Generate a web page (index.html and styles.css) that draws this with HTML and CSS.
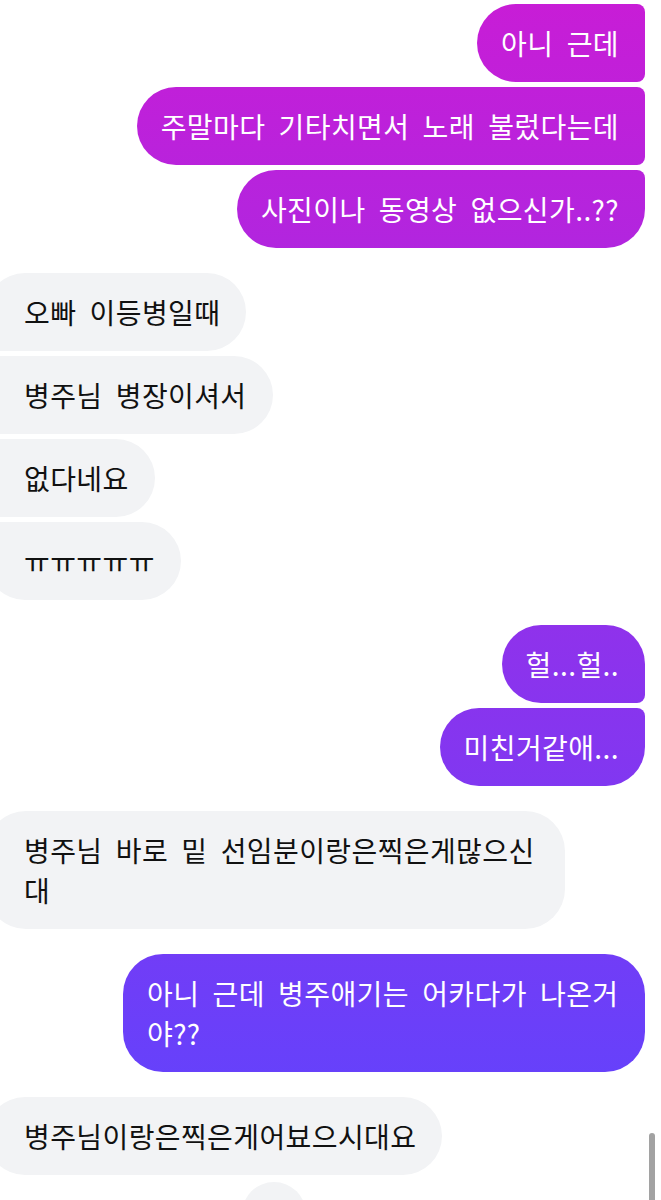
FILE: index.html
```html
<!DOCTYPE html>
<html lang="ko">
<head>
  <meta charset="UTF-8">
  <meta name="viewport" content="width=device-width, initial-scale=1">
  <title>Direct</title>
  <link rel="stylesheet" href="styles.css">
</head>
<body>
  <div class="chat">
    <div class="group out">
      <div class="msg">아니 근데</div>
      <div class="msg">주말마다 기타치면서 노래 불렀다는데</div>
      <div class="msg last">사진이나 동영상 없으신가..??</div>
    </div>

    <div class="group in">
      <div class="msg first">오빠 이등병일때</div>
      <div class="msg">병주님 병장이셔서</div>
      <div class="msg">없다네요</div>
      <div class="msg last">ㅠㅠㅠㅠㅠ</div>
    </div>

    <div class="group out">
      <div class="msg first">헐...헐..</div>
      <div class="msg last">미친거같애...</div>
    </div>

    <div class="group in">
      <div class="msg single wide">병주님 바로 밑 선임분이랑은찍은게많으신대</div>
    </div>

    <div class="group out">
      <div class="msg single wide">아니 근데 병주애기는 어카다가 나온거야??</div>
    </div>

    <div class="group in">
      <div class="msg single">병주님이랑은찍은게어뵤으시대요</div>
      <div class="typing"></div>
    </div>
  </div>

  <div class="scrollbar"></div>
</body>
</html>
```

FILE: styles.css
```css
* {
  margin: 0;
  padding: 0;
  box-sizing: border-box;
}

body {
  background: #fff;
  font-family: "Noto Sans CJK KR", "Noto Sans", sans-serif;
  width: 661px;
  height: 1200px;
  overflow: hidden;
  position: relative;
}

.chat {
  display: flex;
  flex-direction: column;
  gap: 25px;
  padding-top: 4px;
}

.group {
  display: flex;
  flex-direction: column;
  gap: 5px;
}

.msg {
  font-size: 28px;
  letter-spacing: 0.4px;
  word-spacing: 5px;
  line-height: 40px;
  padding: 19px 26px 19px 24px;
}

/* sent: right side, gradient fixed to the screen */
.out {
  align-items: flex-end;
  padding-right: 16px;
}

.out .msg {
  color: #fff;
  background: linear-gradient(180deg, #c81dd6 0px, #5b45ff 1200px);
  background-attachment: fixed;
  border-radius: 39px 8px 8px 39px;
}

.out .msg.first {
  border-top-right-radius: 39px;
}

.out .msg.last {
  border-bottom-right-radius: 39px;
}

.out .msg.single {
  border-radius: 40px;
}

.out .msg.wide {
  max-width: 522px;
  padding-right: 20px;
}

/* received: left side, runs off the screen edge */
.in {
  align-items: flex-start;
}

.in .msg {
  color: #111;
  background: #f2f3f5;
  margin-left: -14px;
  padding-left: 38px;
  border-radius: 8px 39px 39px 8px;
}

.in .msg.first {
  border-top-left-radius: 39px;
}

.in .msg.last {
  border-bottom-left-radius: 39px;
}

.in .msg.single {
  border-radius: 40px;
}

.in .msg.wide {
  max-width: 579px;
  padding-right: 26px;
}

.typing {
  width: 64px;
  height: 64px;
  border-radius: 50%;
  background: #f2f3f5;
  margin: 2px 0 0 242px;
}

.scrollbar {
  position: absolute;
  right: 6px;
  top: 1133px;
  width: 6px;
  height: 80px;
  border-radius: 3px;
  background: #a2a2a2;
}
```
